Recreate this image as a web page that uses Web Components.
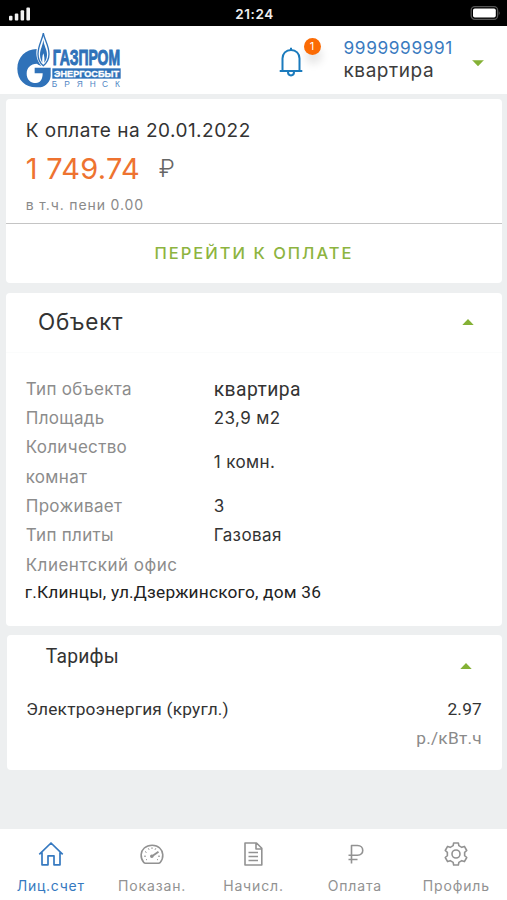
<!DOCTYPE html>
<html lang="ru">
<head>
<meta charset="utf-8">
<title>Лицевой счет</title>
<style>
body {
    margin: 0;
    background: #edeff0;
    font-family: Inter, "Liberation Sans", sans-serif;
    color: #333;
}
</style>
</head>
<body>
<gas-app>
    <gas-status-bar slot="top" time="21:24"></gas-status-bar>
    <gas-header slot="top" account="9999999991" label="квартира" count="1"></gas-header>

    <gas-payment amount="1 749.74">
        <span slot="title">К оплате на 20.01.2022</span>
        <span slot="note">в т.ч. пени 0.00</span>
        <span slot="action">ПЕРЕЙТИ К ОПЛАТЕ</span>
    </gas-payment>

    <gas-object-card heading="Объект">
        <gas-row label="Тип объекта" main>квартира</gas-row>
        <gas-row label="Площадь">23,9 м2</gas-row>
        <gas-row label="Количество комнат">1 комн.</gas-row>
        <gas-row label="Проживает">3</gas-row>
        <gas-row label="Тип плиты">Газовая</gas-row>
        <gas-row label="Клиентский офис" wide>г.Клинцы, ул.Дзержинского, дом 36</gas-row>
    </gas-object-card>

    <gas-tariffs heading="Тарифы">
        <span slot="name">Электроэнергия (кругл.)</span>
        <span slot="price">2.97</span>
        <span slot="unit">р./кВт.ч</span>
    </gas-tariffs>

    <gas-tab slot="bottom" icon="home" selected>Лиц.счет</gas-tab>
    <gas-tab slot="bottom" icon="gauge">Показан.</gas-tab>
    <gas-tab slot="bottom" icon="document">Начисл.</gas-tab>
    <gas-tab slot="bottom" icon="ruble">Оплата</gas-tab>
    <gas-tab slot="bottom" icon="gear">Профиль</gas-tab>
</gas-app>

<script>
class GasElement extends HTMLElement {
    connectedCallback() {
        if (this.shadowRoot) {
            return;
        }
        this.attachShadow({mode: 'open'}).innerHTML = this.render();
    }

    attr(name) {
        return this.getAttribute(name) || '';
    }
}

class GasApp extends GasElement {
    render() {
        return `
<style>
:host {
    display: flex;
    flex-direction: column;
    height: 900px;
    overflow: hidden;
}
main {
    flex: 1;
    display: flex;
    flex-direction: column;
    gap: 9.5px;
    padding: 4.5px 5px 0 6px;
}
nav {
    display: grid;
    grid-template-columns: repeat(5, 1fr);
    height: 71px;
    background: #fff;
}
</style>
<slot name="top"></slot>
<main><slot></slot></main>
<nav><slot name="bottom"></slot></nav>`;
    }
}

class GasStatusBar extends GasElement {
    render() {
        return `
<style>
:host {
    display: grid;
    grid-template-columns: 1fr auto 1fr;
    align-items: center;
    box-sizing: border-box;
    height: 25.5px;
    padding: 2px 7px 0 9px;
    background: #000;
    color: #eee;
    font-weight: 600;
    font-size: 13.5px;
    letter-spacing: .6px;
}
svg { display: block; }
.battery { justify-self: end; }
</style>
<svg width="22" height="14" viewBox="0 0 22 14" fill="#f2f2f2">
    <rect x="0" y="8.7" width="3.5" height="4.8" rx="1"/>
    <rect x="5.8" y="6.4" width="3.5" height="7.1" rx="1"/>
    <rect x="11.6" y="3.2" width="3.5" height="10.3" rx="1"/>
    <rect x="17.4" y=".5" width="3.6" height="13" rx="1"/>
</svg>
<span>${this.attr('time')}</span>
<svg class="battery" width="30" height="15" viewBox="0 0 30 15">
    <rect x="1.2" y=".7" width="26.4" height="12.6" rx="3.5" fill="none" stroke="#555" stroke-width="1.3"/>
    <rect x="3" y="2.4" width="22.8" height="9.2" rx="1.8" fill="#fff"/>
    <path d="M28.8 5.2c1 .5 1 3.3 0 3.8z" fill="#666"/>
</svg>`;
    }
}

class GasLogo extends GasElement {
    render() {
        return `
<style>
:host { display: block; }
svg { display: block; overflow: visible; }
.name { font: bold 67px "Liberation Sans Narrow", "Liberation Sans", sans-serif; }
.sub { font: bold 26px "Liberation Sans", sans-serif; }
.city { font: 25px "Liberation Sans", sans-serif; }
</style>
<svg width="108" height="60" viewBox="48 90 324 180" fill="#2f72b9">
    <path d="M110 147C77 148 52 171 52 206C52 240 76 262 108 262H122C140 258 151 243 152 228V203H104V220H128C128 238 121 249 108 249C91 249 80 238 80 221C80 203 91 192 111 191C116 195 121 197 124 198C111 183 107 165 110 147Z"/>
    <path d="M130 99C127 120 114 136 114 162C114 180 121 190 130 197C139 190 147 180 147 162C147 136 133 120 130 99Z" fill="#fff" stroke="#2f72b9" stroke-width="4"/>
    <path d="M130 119C128 138 120 148 120 164C120 175 124 183 127 188C126 177 127 168 130 160C133 168 134 177 133 188C137 183 141 175 141 164C141 148 132 138 130 119Z"/>
    <text class="name" x="158" y="196" textLength="202" lengthAdjust="spacingAndGlyphs" stroke="#2f72b9" stroke-width="3">ГАЗПРОМ</text>
    <rect x="157" y="205" width="205" height="31"/>
    <text class="sub" x="162" y="230" fill="#fff" stroke="#fff" textLength="195" lengthAdjust="spacingAndGlyphs">ЭНЕРГОСБЫТ</text>
    <text class="city" x="155 193 230 269 306 345" y="262" fill="#4f86c4">БРЯНСК</text>
</svg>`;
    }
}

class GasArrow extends GasElement {
    render() {
        return `
<style>
:host { display: block; width: 12px; height: 6.3px; }
:host([down]) { transform: scaleY(-1); }
svg { display: block; }
</style>
<svg width="12" height="6.3" viewBox="0 0 12 6.3"><path d="M0 6.3L6 0L12 6.3Z" fill="#84b135"/></svg>`;
    }
}

class GasHeader extends GasElement {
    render() {
        return `
<style>
:host {
    display: flex;
    box-sizing: border-box;
    height: 68.5px;
    padding: 4.5px 23px 0 16px;
    background: #fff;
}
.bell {
    position: relative;
    width: 24px;
    height: 31px;
    margin: 16px 0 0 155px;
}
.bell svg { display: block; }
.badge {
    position: absolute;
    left: 24.5px;
    top: -8.5px;
    width: 17px;
    height: 17px;
    border-radius: 50%;
    background: #fb6b04;
    box-shadow: 1px 9px 9px rgba(0, 0, 0, .1);
    color: #fff;
    font-size: 11px;
    line-height: 17px;
    text-align: center;
}
.account {
    margin: 6.5px 0 0 40.5px;
    line-height: 22px;
    font-size: 17.3px;
    letter-spacing: .6px;
    color: #3a7bc0;
}
.label { padding-top: 1px; font-size: 19px; letter-spacing: .55px; color: #3c3c3c; }
gas-arrow { margin: 29.5px 0 0 auto; }
</style>
<gas-logo></gas-logo>
<div class="bell">
    <svg width="24" height="31" viewBox="0 0 24 31" fill="none" stroke="#1b7bbd" stroke-width="2">
        <path d="M3.5 24V12.500C3.5 7.500 7 4 12 4S20.5 7.500 20.5 12.500V24"/>
        <path d="M.7 25H23.3M12 1.800V4.500"/>
        <path d="M9 26C9 30.500 15 30.500 15 26"/>
    </svg>
    <span class="badge">${this.attr('count')}</span>
</div>
<div class="account">
    <div>${this.attr('account')}</div>
    <div class="label">${this.attr('label')}</div>
</div>
<gas-arrow down></gas-arrow>`;
    }
}

class GasPayment extends GasElement {
    render() {
        return `
<style>
:host {
    display: block;
    box-sizing: border-box;
    height: 184.5px;
    border-radius: 4px;
    background: #fff;
}
.sum {
    box-sizing: border-box;
    height: 125.5px;
    padding: 20.5px 19px 0 19.7px;
    border-bottom: 1.5px solid #c4c4c4;
}
.title { line-height: 23px; font-size: 19px; letter-spacing: .48px; }
.amount {
    display: flex;
    align-items: center;
    gap: 18.5px;
    height: 36px;
    padding-top: 8px;
    font-size: 29px;
    letter-spacing: .3px;
    color: #ee7330;
}
.currency { font-size: 24px; font-weight: 300; color: #666; }
.note { margin-top: 9px; line-height: 20px; font-size: 14px; letter-spacing: .87px; color: #8a8a8a; }
.action {
    line-height: 59px;
    text-align: center;
    font-size: 16.5px;
    font-weight: 500;
    letter-spacing: 2px;
    color: #8db440;
}
</style>
<div class="sum">
    <div class="title"><slot name="title"></slot></div>
    <div class="amount"><span>${this.attr('amount')}</span><span class="currency">₽</span></div>
    <div class="note"><slot name="note"></slot></div>
</div>
<div class="action"><slot name="action"></slot></div>`;
    }
}

class GasObjectCard extends GasElement {
    render() {
        return `
<style>
:host {
    display: block;
    box-sizing: border-box;
    height: 333px;
    border-radius: 4px;
    background: #fff;
}
header {
    display: flex;
    align-items: center;
    justify-content: space-between;
    height: 59px;
    padding: 0 28px 0 32px;
    border-bottom: 1px solid #fbfcfc;
    font-size: 22.5px;
    line-height: 28px;
    letter-spacing: .75px;
}
header span { margin-bottom: 1px; }
section { padding: 22.3px 19px 0 19.7px; }
</style>
<header><span>${this.attr('heading')}</span><gas-arrow></gas-arrow></header>
<section><slot></slot></section>`;
    }
}

class GasRow extends GasElement {
    render() {
        return `
<style>
:host {
    display: grid;
    grid-template-columns: 150px 1fr;
    column-gap: 38px;
    align-items: center;
    line-height: 29.33px;
    font-size: 17px;
    letter-spacing: .4px;
}
:host([wide]) { display: block; }
.label { width: 130px; letter-spacing: .32px; color: #8c8c8c; }
:host([wide]) .label { width: auto; letter-spacing: .5px; }
:host([main]) .value { font: 19.3px/29.33px Roboto, sans-serif; letter-spacing: .45px; }
:host([wide]) .value {
    margin: -2px 0 0 -1px;
    font: 17.3px/29.33px Roboto, sans-serif;
    letter-spacing: .2px;
    color: #222;
}
</style>
<div class="label">${this.attr('label')}</div>
<div class="value"><slot></slot></div>`;
    }
}

class GasTariffs extends GasElement {
    render() {
        return `
<style>
:host {
    display: block;
    box-sizing: border-box;
    height: 135px;
    margin-left: 1px;
    padding: 9.5px 20px 0 19.3px;
    border-radius: 4px;
    background: #fff;
    font: 17.3px/29px Roboto, sans-serif;
    letter-spacing: .22px;
}
header {
    display: flex;
    justify-content: space-between;
    height: 50.5px;
    padding: 0 10px 0 19.5px;
    font-size: 19.3px;
    line-height: 23px;
}
gas-arrow { margin-top: 18.5px; }
.tariff { display: flex; justify-content: space-between; }
.cost { text-align: right; }
.unit { color: #8a8a8a; letter-spacing: .25px; }
</style>
<header><span>${this.attr('heading')}</span><gas-arrow></gas-arrow></header>
<div class="tariff">
    <div><slot name="name"></slot></div>
    <div class="cost">
        <div><slot name="price"></slot></div>
        <div class="unit"><slot name="unit"></slot></div>
    </div>
</div>`;
    }
}

// outline of a cog with six teeth, centred in the 26px icon box
function gearPath() {
    const points = [];
    for (let i = 0; i < 6; i++) {
        [[-19, 8.8], [-12, 11.3], [12, 11.3], [19, 8.8]].forEach(([deg, radius]) => {
            const a = (i * 60 + deg - 90) * Math.PI / 180;
            points.push(`${(13 + radius * Math.cos(a)).toFixed(2)} ${(13 + radius * Math.sin(a)).toFixed(2)}`);
        });
    }
    return `M${points.join('L')}Z`;
}

const icons = {
    home: '<path stroke-width="1.7" d="M1.3 13.4L13 2L24.7 13.4M4 11.5V23.8H10V14.8H16V23.8H22V11.5"/>',
    gauge: `<path d="M4.8 21.5C.6 16.5 1.8 10 5.3 7C9.5 3.3 17 3.3 20.7 7C24.2 10.3 25.2 16.5 21.2 21.5C20.7 22.2 20.2 22.3 19.5 22.3H6.5C5.7 22.3 5.3 22.2 4.8 21.5Z"/>
        <path stroke-width="1" d="M5 15.2H7M6 10.5L7.5 11.5M9.3 7.3L10.1 8.8M13 6.3V8M16.8 7.3L16 8.8M19 15.2H21M19 19L18 18.3M7 19L8 18.3"/>
        <path stroke-width="1.9" d="M13 15.3L19.5 10.8"/><circle cx="12.8" cy="15.3" r="1" fill="currentColor"/>`,
    document: '<path d="M5 2H16.5L21.8 7.3V24H5ZM16 2V8H21.8M8.5 11.5H18M8.5 15.5H18M8.5 19.5H18"/>',
    ruble: '<path d="M9.5 22.500V4.500H15.500C22.500 4.500 22.500 14.300 15.500 14.300H6.500M6.500 18.500H15.500"/>',
    gear: `<path d="${gearPath()}"/><circle cx="13" cy="13" r="4"/>`
};

class GasTab extends GasElement {
    render() {
        return `
<style>
:host {
    display: flex;
    flex-direction: column;
    align-items: center;
    padding-top: 11.5px;
    font-size: 14px;
    line-height: 20px;
    letter-spacing: .85px;
    color: #929292;
}
:host([selected]) { color: #3679c0; letter-spacing: .75px; }
svg { display: block; margin-bottom: 9.5px; }
</style>
<svg width="26" height="26" viewBox="0 0 26 26" fill="none" stroke="currentColor" stroke-width="1.6" stroke-linejoin="round">${icons[this.attr('icon')]}</svg>
<span><slot></slot></span>`;
    }
}

customElements.define('gas-app', GasApp);
customElements.define('gas-status-bar', GasStatusBar);
customElements.define('gas-logo', GasLogo);
customElements.define('gas-arrow', GasArrow);
customElements.define('gas-header', GasHeader);
customElements.define('gas-payment', GasPayment);
customElements.define('gas-object-card', GasObjectCard);
customElements.define('gas-row', GasRow);
customElements.define('gas-tariffs', GasTariffs);
customElements.define('gas-tab', GasTab);
</script>
</body>
</html>
